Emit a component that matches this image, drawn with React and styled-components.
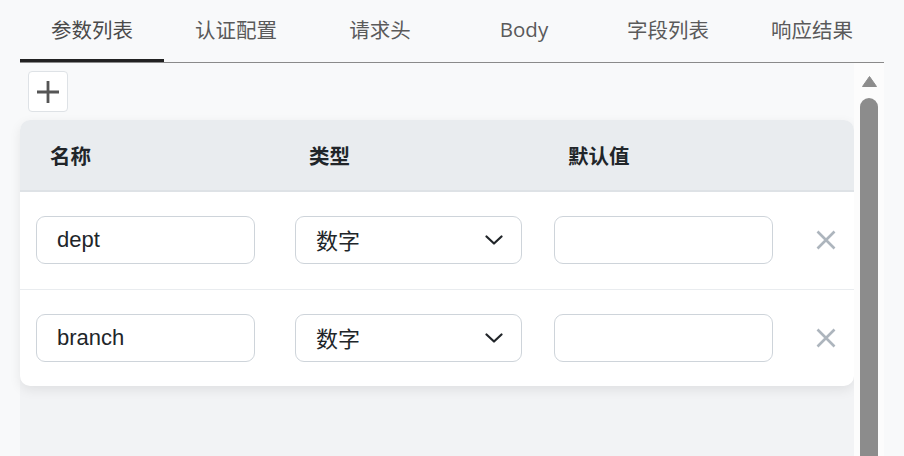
import React from "react";
import styled, { createGlobalStyle } from "styled-components";

const Global = createGlobalStyle`
  html, body { margin: 0; padding: 0; background: #f8f9fa; }
  body { font-family: "Open Sans", "Noto Sans CJK SC", sans-serif; overflow: hidden; }
  * { box-sizing: border-box; }
`;

const Page = styled.div`
  width: 904px;
  height: 456px;
  padding: 0 20px;
  display: flex;
  flex-direction: column;
  background: #f8f9fa;
`;

const TabBar = styled.div`
  display: grid;
  grid-template-columns: repeat(6, 1fr);
  height: 63px;
  border-bottom: 1px solid #8a8a8a;
  flex-shrink: 0;
`;

const Tab = styled.div`
  height: 62px;
  display: flex;
  align-items: center;
  justify-content: center;
  padding-bottom: 4px;
  padding-top: 2px;
  font-size: 20.5px;
  color: ${(p) => (p.$active ? "#4a4a4a" : "#5a5a5a")};
  font-family: "Open Sans", "Noto Sans CJK SC", sans-serif;
  border-bottom: 3px solid ${(p) => (p.$active ? "#222" : "transparent")};
`;

const Body = styled.div`
  flex: 1;
  display: flex;
  min-height: 0;
`;

const Main = styled.div`
  flex: 1;
  display: flex;
  flex-direction: column;
`;

const Toolbar = styled.div`
  padding: 8px 8px 8px;
`;

const AddButton = styled.button`
  width: 40px;
  height: 41px;
  border: 1px solid #dee2e6;
  border-radius: 4px;
  background: #fff;
  display: flex;
  align-items: center;
  justify-content: center;
  padding: 0;
`;

const Wrapper = styled.div`
  flex: 1;
  background: #f2f3f5;
  border-radius: 10px 10px 0 0;
`;

const Card = styled.div`
  background: #fff;
  border-radius: 10px;
  box-shadow: 0 4px 12px rgba(0, 0, 0, 0.08);
  overflow: hidden;
`;

const GridRow = styled.div`
  display: grid;
  grid-template-columns: 259px 259px 259px 1fr;
  align-items: center;
  padding-left: 16px;
`;

const HeadRow = styled(GridRow)`
  height: 72px;
  background: #e9ecef;
  border-bottom: 2px solid #dee2e6;
`;

const HeadCell = styled.div`
  padding-left: 14px;
  font-family: "Noto Sans CJK SC", sans-serif;
  font-weight: 700;
  font-size: 20.5px;
  color: #212529;
`;

const Row = styled(GridRow)`
  padding-top: 24px;
  padding-bottom: ${(p) => (p.$last ? 24 : 25)}px;
  border-bottom: ${(p) => (p.$last ? "none" : "1px solid #e9ecef")};
`;

const TextInput = styled.div`
  width: ${(p) => p.$w}px;
  height: 48px;
  border: 1px solid #ced4da;
  border-radius: 9px;
  background: #fff;
  display: flex;
  align-items: center;
  padding-left: 20px;
  font-family: "Liberation Sans", "Noto Sans CJK SC", sans-serif;
  font-size: 22px;
  line-height: 1;
  color: #212529;
`;

const Select = styled(TextInput)`
  justify-content: space-between;
  padding-right: 18px;
`;

const SelectValue = styled.span`
  font-family: "Noto Sans CJK SC", sans-serif;
  line-height: 1;
  margin-top: -2px;
`;

const RemoveButton = styled.button`
  width: 26px;
  height: 26px;
  border: none;
  background: transparent;
  padding: 0;
  display: flex;
  align-items: center;
  justify-content: center;
`;

const ScrollTrack = styled.div`
  width: 30px;
  background: #fcfcfc;
  display: flex;
  flex-direction: column;
  align-items: center;
  padding-top: 13px;
`;

const Thumb = styled.div`
  width: 18px;
  flex: 1;
  margin-top: 11px;
  background: #8c8c8c;
  border-radius: 9px 9px 0 0;
`;

const PlusIcon = () => (
  <svg width="24" height="24" viewBox="0 0 24 24">
    <path d="M12 1v22M1 12h22" stroke="#555" strokeWidth="2.8" fill="none" />
  </svg>
);

const Chevron = () => (
  <svg width="18" height="10" viewBox="0 0 18 10">
    <path d="M1.5 1.5L9 8.5L16.5 1.5" stroke="#212529" strokeWidth="2.2" fill="none" strokeLinecap="round" strokeLinejoin="round" />
  </svg>
);

const XIcon = () => (
  <svg width="20" height="20" viewBox="0 0 20 20">
    <path d="M1.5 1.5L18.5 18.5M18.5 1.5L1.5 18.5" stroke="#adb5bd" strokeWidth="2.6" fill="none" />
  </svg>
);

const ArrowUp = () => (
  <svg width="15" height="11" viewBox="0 0 15 11">
    <path d="M7.5 0.5L14.5 10.5H0.5Z" fill="#8c8c8c" stroke="#8c8c8c" strokeLinejoin="round" />
  </svg>
);

const tabs = ["参数列表", "认证配置", "请求头", "Body", "字段列表", "响应结果"];
const rows = [
  { name: "dept", type: "数字", def: "" },
  { name: "branch", type: "数字", def: "" },
];

export default function App() {
  return (
    <>
      <Global />
      <Page>
        <TabBar>
          {tabs.map((t, i) => (
            <Tab key={t} $active={i === 0}>
              {t}
            </Tab>
          ))}
        </TabBar>
        <Body>
          <Main>
            <Toolbar>
              <AddButton>
                <PlusIcon />
              </AddButton>
            </Toolbar>
            <Wrapper>
              <Card>
                <HeadRow>
                  <HeadCell>名称</HeadCell>
                  <HeadCell>类型</HeadCell>
                  <HeadCell>默认值</HeadCell>
                  <div />
                </HeadRow>
                {rows.map((r, i) => (
                  <Row key={r.name} $last={i === rows.length - 1}>
                    <TextInput $w={219}>{r.name}</TextInput>
                    <Select $w={227}>
                      <SelectValue>{r.type}</SelectValue>
                      <Chevron />
                    </Select>
                    <TextInput $w={219}>{r.def}</TextInput>
                    <RemoveButton>
                      <XIcon />
                    </RemoveButton>
                  </Row>
                ))}
              </Card>
            </Wrapper>
          </Main>
          <ScrollTrack>
            <ArrowUp />
            <Thumb />
          </ScrollTrack>
        </Body>
      </Page>
    </>
  );
}
